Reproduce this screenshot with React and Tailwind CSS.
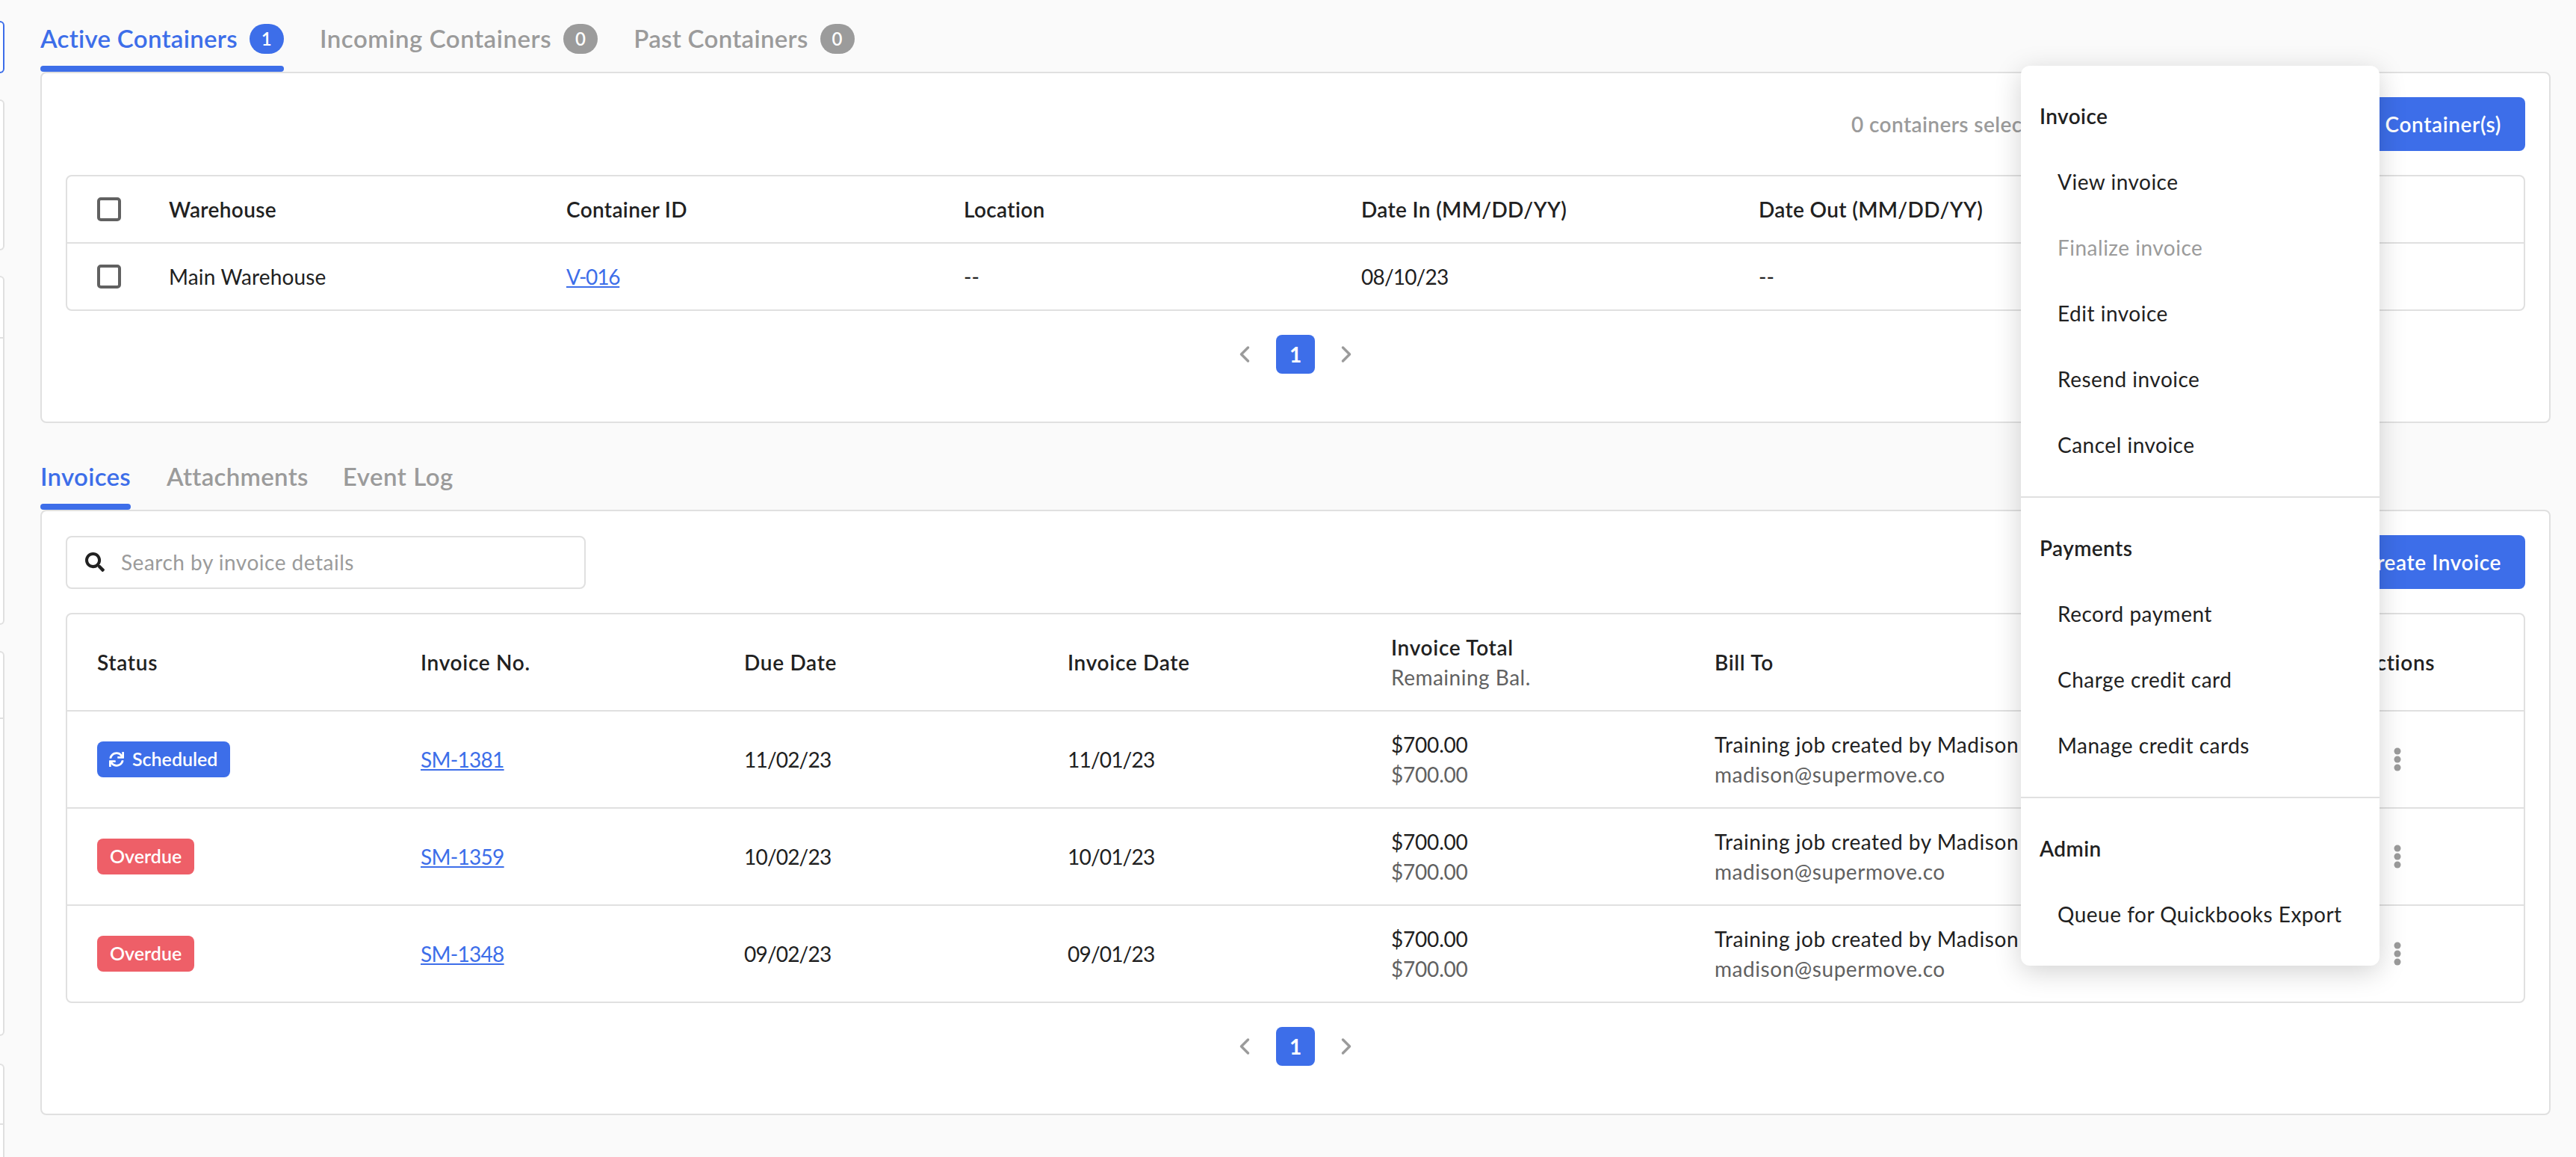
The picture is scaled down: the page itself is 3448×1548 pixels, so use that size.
import React from "react";
import { FaSearch, FaSync } from "react-icons/fa";

const Check = () => <div className="h-[32px] w-[32px] rounded-[5px] border-[4px] border-[#616161] bg-white" />;

const Pager = () => (
  <div className="mt-[32px] flex items-center justify-center gap-[16px]">
    <div className="flex h-[52px] w-[52px] items-center justify-center">
      <svg width="14" height="24" viewBox="0 0 14 24" fill="none" stroke="#9b9b9b" strokeWidth="3.5" strokeLinecap="round" strokeLinejoin="round"><polyline points="11.5,3 2.5,12 11.5,21" /></svg>
    </div>
    <div className="flex h-[52px] w-[52px] items-center justify-center rounded-[8px] bg-[#3d6ee9] text-[28px] font-bold text-white">1</div>
    <div className="flex h-[52px] w-[52px] items-center justify-center">
      <svg width="14" height="24" viewBox="0 0 14 24" fill="none" stroke="#9b9b9b" strokeWidth="3.5" strokeLinecap="round" strokeLinejoin="round"><polyline points="2.5,3 11.5,12 2.5,21" /></svg>
    </div>
  </div>
);

const Tab = ({ label, badge, active, wide }) => (
  <div className="flex flex-col">
    <div className={`flex h-[56px] items-center gap-[16px] text-[33px] font-semibold ${wide ? "tracking-[0.55px]" : "tracking-[0.3px]"} ${active ? "text-[#3d6ee9]" : "text-[#9b9b9b]"}`}>
      <span>{label}</span>
      {badge !== undefined && (
        <span className={`flex h-[40px] w-[46px] items-center justify-center rounded-full text-[24px] font-semibold text-white ${active ? "bg-[#3d6ee9]" : "bg-[#9b9b9b]"}`}>{badge}</span>
      )}
    </div>
    <div className={`mt-[8px] h-[8px] rounded-[4px] ${active ? "bg-[#3d6ee9]" : "bg-transparent"}`} />
  </div>
);

const invoices = [
  { status: "Scheduled", no: "SM-1381", due: "11/02/23", date: "11/01/23" },
  { status: "Overdue", no: "SM-1359", due: "10/02/23", date: "10/01/23" },
  { status: "Overdue", no: "SM-1348", due: "09/02/23", date: "09/01/23" },
];

const Dots = () => (
  <svg width="10" height="32" viewBox="0 0 10 32" fill="#9b9b9b"><circle cx="5" cy="5" r="4.5" /><circle cx="5" cy="16" r="4.5" /><circle cx="5" cy="27" r="4.5" /></svg>
);

const invoiceGrid = "grid grid-cols-[433px_433px_433px_433px_433px_866px_1fr] items-center pl-[40px]";
const containerGrid = "grid grid-cols-[96px_532px_532px_532px_532px_1fr] items-center pl-[40px]";

const MenuSection = ({ title, items }) => (
  <div className="py-[24px]">
    <div className="flex h-[88px] items-center px-[25px] pb-[2px] text-[28px] font-semibold tracking-[0.4px] text-[#212121]">{title}</div>
    {items.map((it) => (
      <div key={it} className={`flex h-[88px] items-center pb-[2px] pl-[49px] text-[28px] tracking-[0.5px] ${it === "Finalize invoice" ? "text-[#9b9b9b]" : "text-[#212121]"}`}>{it}</div>
    ))}
  </div>
);

export default function App() {
  return (
    <div className="relative flex h-[1548px] w-full overflow-hidden bg-[#fafafa] font-['Lato',sans-serif] text-[28px] text-[#212121]">
      <aside className="flex w-[6px] shrink-0 flex-col">
        <div className="mt-[28px] h-[70px] shrink-0 rounded-r-[8px] border-y-2 border-r-2 border-[#3d6ee9] bg-white" />
        <div className="mt-[35px] h-[202px] shrink-0 rounded-r-[8px] border-y-2 border-r-2 border-[#e0e0e0] bg-white" />
        <div className="mt-[34px] h-[467px] shrink-0 rounded-r-[8px] border-y-2 border-r-2 border-[#e0e0e0] bg-white">
          <div className="mt-[80px] border-t-2 border-[#e0e0e0]" />
        </div>
        <div className="mt-[35px] h-[515px] shrink-0 rounded-r-[8px] border-y-2 border-r-2 border-[#e0e0e0] bg-white">
          <div className="mt-[87px] border-t-2 border-[#e0e0e0]" />
        </div>
        <div className="mt-[37px] h-[200px] shrink-0 rounded-tr-[8px] border-t-2 border-r-2 border-[#e0e0e0] bg-white">
          <div className="mt-[78px] border-t-2 border-[#e0e0e0]" />
        </div>
      </aside>

      <main className="ml-[48px] flex w-[3360px] shrink-0 flex-col pt-[24px]">
        <div className="flex gap-[48px]">
          <Tab label="Active Containers" badge={1} active />
          <Tab label="Incoming Containers" badge={0} wide />
          <Tab label="Past Containers" badge={0} />
        </div>

        <section className="h-[470px] rounded-[8px] border-2 border-[#e0e0e0] bg-white p-[32px]">
          <div className="flex h-[72px] items-center justify-end gap-[194px]">
            <span className="w-[228px] overflow-hidden whitespace-nowrap text-[28px] font-semibold tracking-[0.4px] text-[#9b9b9b]">0 containers selected</span>
            <button className="flex h-[72px] w-[480px] items-center justify-end rounded-[8px] bg-[#3d6ee9] px-[32px] text-[28px] font-semibold tracking-[0.6px] text-white">Move Container(s)</button>
          </div>
          <div className="mt-[32px] rounded-[8px] border-2 border-[#e0e0e0]">
            <div className={`${containerGrid} h-[88px] font-semibold tracking-[0.35px]`}>
              <Check />
              <span>Warehouse</span>
              <span>Container ID</span>
              <span>Location</span>
              <span>Date In (MM/DD/YY)</span>
              <span>Date Out (MM/DD/YY)</span>
            </div>
            <div className={`${containerGrid} h-[90px] border-t-2 border-[#e0e0e0]`}>
              <Check />
              <span className="tracking-[0.15px]">Main Warehouse</span>
              <span className="tracking-[-1.2px] text-[#3d6ee9] underline">V-016</span>
              <span>--</span>
              <span className="tracking-[-0.8px]">08/10/23</span>
              <span>--</span>
            </div>
          </div>
          <Pager />
        </section>

        <div className="mt-[44px] flex gap-[48px]">
          <Tab label="Invoices" active />
          <Tab label="Attachments" />
          <div className="-ml-[2px] tracking-[0.7px]"><Tab label="Event Log" wide /></div>
        </div>

        <section className="h-[810px] rounded-[8px] border-2 border-[#e0e0e0] bg-white p-[32px]">
          <div className="flex h-[72px] items-center justify-between">
            <div className="flex h-[71px] w-[696px] items-center gap-[22px] rounded-[8px] border-2 border-[#e0e0e0] bg-white pl-[24px]">
              <FaSearch className="h-[26px] w-[26px] text-[#212121]" />
              <span className="text-[28px] tracking-[0.5px] text-[#9b9b9b]">Search by invoice details</span>
            </div>
            <button className="flex h-[72px] items-center gap-[12px] rounded-[8px] bg-[#3d6ee9] px-[32px] text-[28px] font-semibold tracking-[0.6px] text-white">Create Invoice</button>
          </div>
          <div className="mt-[32px] rounded-[8px] border-2 border-[#e0e0e0]">
            <div className={`${invoiceGrid} h-[128px] font-semibold tracking-[0.7px]`}>
              <span>Status</span>
              <span>Invoice No.</span>
              <span>Due Date</span>
              <span>Invoice Date</span>
              <div className="flex flex-col leading-[40px]">
                <span>Invoice Total</span>
                <span className="font-normal tracking-[0.5px] text-[#616161]">Remaining Bal.</span>
              </div>
              <span>Bill To</span>
              <span>Actions</span>
            </div>
            {invoices.map((r) => (
              <div key={r.no} className={`${invoiceGrid} h-[130px] border-t-2 border-[#e0e0e0]`}>
                <div>
                  {r.status === "Scheduled" ? (
                    <span className="inline-flex h-[48px] items-center gap-[11px] rounded-[8px] bg-[#3d6ee9] pl-[16px] pr-[17px] text-[25px] font-semibold text-white">
                      <FaSync className="h-[20px] w-[20px]" />
                      {r.status}
                    </span>
                  ) : (
                    <span className="inline-flex h-[48px] items-center rounded-[8px] bg-[#ee5f68] px-[17px] text-[25px] font-semibold text-white">{r.status}</span>
                  )}
                </div>
                <span className="tracking-[-0.7px] text-[#3d6ee9] underline">{r.no}</span>
                <span className="tracking-[-0.8px]">{r.due}</span>
                <span className="tracking-[-0.8px]">{r.date}</span>
                <div className="flex flex-col leading-[40px] tracking-[-0.2px]">
                  <span>$700.00</span>
                  <span className="text-[#616161]">$700.00</span>
                </div>
                <div className="flex flex-col leading-[40px] tracking-[0.55px]">
                  <span>Training job created by Madison</span>
                  <span className="text-[#616161]">madison@supermove.co</span>
                </div>
                <div className="ml-[43px] flex"><Dots /></div>
              </div>
            ))}
          </div>
          <Pager />
        </section>
      </main>

      <div className="absolute left-[2705px] top-[88px] w-[480px] rounded-[12px] bg-white shadow-[0_8px_36px_rgba(0,0,0,0.18)]">
        <MenuSection title="Invoice" items={["View invoice", "Finalize invoice", "Edit invoice", "Resend invoice", "Cancel invoice"]} />
        <div className="border-t-2 border-[#e0e0e0]" />
        <MenuSection title="Payments" items={["Record payment", "Charge credit card", "Manage credit cards"]} />
        <div className="border-t-2 border-[#e0e0e0]" />
        <MenuSection title="Admin" items={["Queue for Quickbooks Export"]} />
      </div>
    </div>
  );
}
